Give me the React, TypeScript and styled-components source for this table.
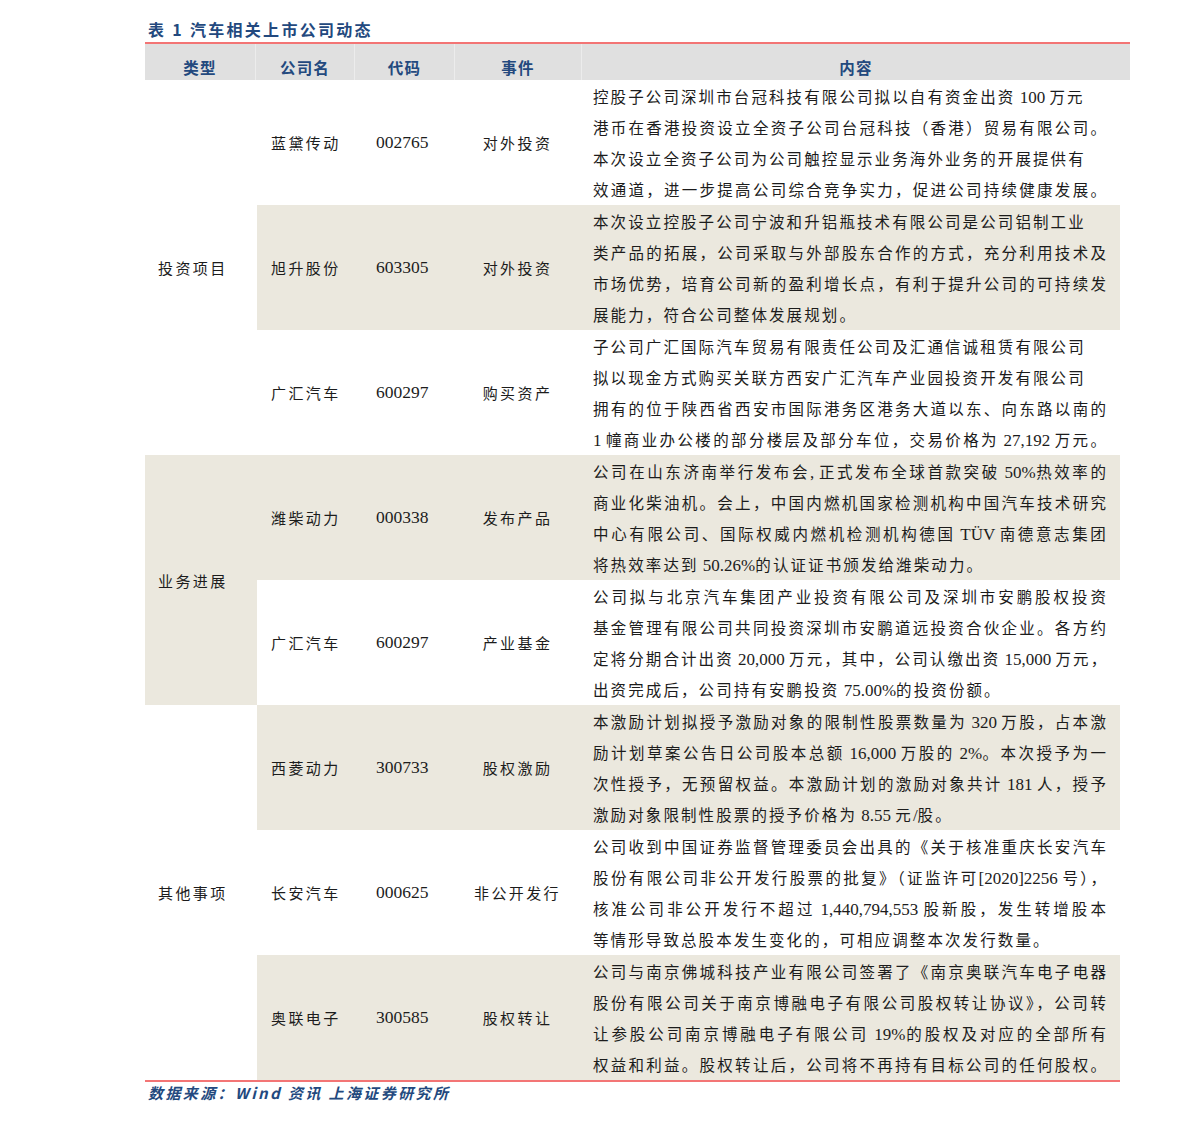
import React from 'react';
import styled, { createGlobalStyle } from 'styled-components';

const GlobalStyle = createGlobalStyle`
  html, body {
    margin: 0;
    padding: 0;
    background: #ffffff;
  }
  body {
    font-family: "Liberation Serif", "Noto Sans CJK SC", serif;
    color: #1c1c1c;
  }
`;

type Item = {
  company: string;
  code: string;
  event: string;
  lines: [string, boolean][];
};

type Group = {
  type: string;
  items: Item[];
};

const groups: Group[] = [
  {
    type: '投资项目',
    items: [
      {
        company: '蓝黛传动',
        code: '002765',
        event: '对外投资',
        lines: [
          ['控股子公司深圳市台冠科技有限公司拟以自有资金出资 100 万元', false],
          ['港币在香港投资设立全资子公司台冠科技（香港）贸易有限公司。', true],
          ['本次设立全资子公司为公司触控显示业务海外业务的开展提供有', false],
          ['效通道，进一步提高公司综合竞争实力，促进公司持续健康发展。', true],
        ],
      },
      {
        company: '旭升股份',
        code: '603305',
        event: '对外投资',
        lines: [
          ['本次设立控股子公司宁波和升铝瓶技术有限公司是公司铝制工业', false],
          ['类产品的拓展，公司采取与外部股东合作的方式，充分利用技术及', true],
          ['市场优势，培育公司新的盈利增长点，有利于提升公司的可持续发', true],
          ['展能力，符合公司整体发展规划。', false],
        ],
      },
      {
        company: '广汇汽车',
        code: '600297',
        event: '购买资产',
        lines: [
          ['子公司广汇国际汽车贸易有限责任公司及汇通信诚租赁有限公司', false],
          ['拟以现金方式购买关联方西安广汇汽车产业园投资开发有限公司', false],
          ['拥有的位于陕西省西安市国际港务区港务大道以东、向东路以南的', true],
          ['1 幢商业办公楼的部分楼层及部分车位，交易价格为 27,192 万元。', true],
        ],
      },
    ],
  },
  {
    type: '业务进展',
    items: [
      {
        company: '潍柴动力',
        code: '000338',
        event: '发布产品',
        lines: [
          ['公司在山东济南举行发布会, 正式发布全球首款突破 50%热效率的', true],
          ['商业化柴油机。会上，中国内燃机国家检测机构中国汽车技术研究', true],
          ['中心有限公司、国际权威内燃机检测机构德国 TÜV 南德意志集团', true],
          ['将热效率达到 50.26%的认证证书颁发给潍柴动力。', false],
        ],
      },
      {
        company: '广汇汽车',
        code: '600297',
        event: '产业基金',
        lines: [
          ['公司拟与北京汽车集团产业投资有限公司及深圳市安鹏股权投资', true],
          ['基金管理有限公司共同投资深圳市安鹏道远投资合伙企业。各方约', true],
          ['定将分期合计出资 20,000 万元，其中，公司认缴出资 15,000 万元，', true],
          ['出资完成后，公司持有安鹏投资 75.00%的投资份额。', false],
        ],
      },
    ],
  },
  {
    type: '其他事项',
    items: [
      {
        company: '西菱动力',
        code: '300733',
        event: '股权激励',
        lines: [
          ['本激励计划拟授予激励对象的限制性股票数量为 320 万股，占本激', true],
          ['励计划草案公告日公司股本总额 16,000 万股的 2%。本次授予为一', true],
          ['次性授予，无预留权益。本激励计划的激励对象共计 181 人，授予', true],
          ['激励对象限制性股票的授予价格为 8.55 元/股。', false],
        ],
      },
      {
        company: '长安汽车',
        code: '000625',
        event: '非公开发行',
        lines: [
          ['公司收到中国证券监督管理委员会出具的《关于核准重庆长安汽车', true],
          ['股份有限公司非公开发行股票的批复》（证监许可[2020]2256 号），', true],
          ['核准公司非公开发行不超过 1,440,794,553 股新股，发生转增股本', true],
          ['等情形导致总股本发生变化的，可相应调整本次发行数量。', false],
        ],
      },
      {
        company: '奥联电子',
        code: '300585',
        event: '股权转让',
        lines: [
          ['公司与南京佛城科技产业有限公司签署了《南京奥联汽车电子电器', true],
          ['股份有限公司关于南京博融电子有限公司股权转让协议》，公司转', true],
          ['让参股公司南京博融电子有限公司 19%的股权及对应的全部所有', true],
          ['权益和利益。股权转让后，公司将不再持有目标公司的任何股权。', true],
        ],
      },
    ],
  },
];

const SHADE = '#ebe8de';
const BLUE = '#23497e';
const RED = '#f37575';

// split a line into Latin runs and CJK runs so the digits keep tight spacing
const splitRuns = (text: string) => text.match(/[\x20-\x7e\u00c0-\u00ff]+|[^\x20-\x7e\u00c0-\u00ff]+/g) ?? [];
const isLatin = (run: string) => /^[\x20-\x7e\u00c0-\u00ff]+$/.test(run);

const Page = styled.div`
  padding: 17px 0 40px 145px;
  width: 985px;
`;

const Title = styled.div`
  height: 24px;
  padding-left: 3px;
  font-family: "Noto Sans CJK SC", sans-serif;
  font-size: 16px;
  font-weight: 700;
  line-height: 24px;
  letter-spacing: 2.3px;
  color: ${BLUE};
`;

const Rule = styled.div<{ $width: number }>`
  width: ${(p) => p.$width}px;
  height: 2px;
  background: ${RED};
`;

const TopRule = styled(Rule)`
  margin-top: 1px;
`;

const HeaderRow = styled.div`
  display: grid;
  grid-template-columns: 110px 99px 100px 127px 549px;
  height: 36px;
  background: #e0e0e0;
`;

const HeaderCell = styled.div<{ $first?: boolean }>`
  display: flex;
  align-items: center;
  justify-content: center;
  padding-top: 9px;
  box-sizing: border-box;
  border-left: ${(p) => (p.$first ? 'none' : '1px solid #ececec')};
  font-family: "Noto Sans CJK SC", sans-serif;
  font-size: 15.5px;
  font-weight: 700;
  letter-spacing: 1.2px;
  color: ${BLUE};
`;

const Body = styled.div`
  display: grid;
  grid-template-columns: 112px 97px 100px 127px 539px;
  grid-auto-rows: 125px;
  width: 975px;
`;

const TypeCell = styled.div<{ $span: number; $shade: boolean }>`
  grid-column: 1;
  grid-row: span ${(p) => p.$span};
  display: flex;
  align-items: center;
  padding-left: 13px;
  background: ${(p) => (p.$shade ? SHADE : 'transparent')};
  font-family: "Noto Sans CJK SC", sans-serif;
  font-size: 15px;
  letter-spacing: 2.4px;
`;

const Cell = styled.div<{ $shade: boolean; $pad?: number; $center?: boolean }>`
  display: flex;
  align-items: center;
  justify-content: ${(p) => (p.$center ? 'center' : 'flex-start')};
  padding-left: ${(p) => p.$pad ?? 0}px;
  background: ${(p) => (p.$shade ? SHADE : 'transparent')};
  font-size: 16px;
  letter-spacing: 2.4px;
  white-space: nowrap;
`;

const CjkText = styled.span`
  font-family: "Noto Sans CJK SC", sans-serif;
  font-size: 15px;
`;

const CodeText = styled.span`
  font-family: "Liberation Serif", serif;
  font-size: 17.5px;
  letter-spacing: 0;
`;

const ContentCell = styled.div<{ $shade: boolean }>`
  padding: 1px 12px 0 12px;
  background: ${(p) => (p.$shade ? SHADE : 'transparent')};
`;

const Line = styled.div<{ $justify: boolean }>`
  height: 31px;
  line-height: 31px;
  font-family: "Noto Sans CJK SC", sans-serif;
  font-size: 15.5px;
  letter-spacing: 2.1px;
  white-space: nowrap;
  text-align: ${(p) => (p.$justify ? 'justify' : 'left')};
  text-align-last: ${(p) => (p.$justify ? 'justify' : 'left')};
  text-justify: inter-character;
`;

const Latin = styled.span`
  font-family: "Liberation Serif", serif;
  font-size: 17px;
  letter-spacing: 0;
`;

const Source = styled.div`
  padding-left: 3px;
  line-height: 22px;
  font-family: "Noto Sans CJK SC", sans-serif;
  font-size: 15px;
  font-weight: 700;
  font-style: italic;
  letter-spacing: 2.4px;
  color: ${BLUE};
`;

const headers = ['类型', '公司名', '代码', '事件', '内容'];

export default function App() {
  let index = 0;
  return (
    <>
      <GlobalStyle />
      <Page>
        <Title>表 1 汽车相关上市公司动态</Title>
        <TopRule $width={985} />
        <HeaderRow>
          {headers.map((h, i) => (
            <HeaderCell key={h} $first={i === 0}>
              {h}
            </HeaderCell>
          ))}
        </HeaderRow>
        <Body>
          {groups.map((g, gi) => (
            <React.Fragment key={g.type}>
              <TypeCell $span={g.items.length} $shade={gi === 1}>
                {g.type}
              </TypeCell>
              {g.items.map((item) => {
                const shade = index++ % 2 === 1;
                return (
                  <React.Fragment key={item.company + item.code}>
                    <Cell $shade={shade} $pad={14}>
                      <CjkText>{item.company}</CjkText>
                    </Cell>
                    <Cell $shade={shade} $pad={22}>
                      <CodeText>{item.code}</CodeText>
                    </Cell>
                    <Cell $shade={shade} $center>
                      <CjkText>{item.event}</CjkText>
                    </Cell>
                    <ContentCell $shade={shade}>
                      {item.lines.map(([text, justify], li) => (
                        <Line key={li} $justify={justify}>
                          {splitRuns(text).map((run, ri) =>
                            isLatin(run) ? <Latin key={ri}>{run}</Latin> : run
                          )}
                        </Line>
                      ))}
                    </ContentCell>
                  </React.Fragment>
                );
              })}
            </React.Fragment>
          ))}
        </Body>
        <Rule $width={975} />
        <Source>数据来源：Wind 资讯 上海证券研究所</Source>
      </Page>
    </>
  );
}
